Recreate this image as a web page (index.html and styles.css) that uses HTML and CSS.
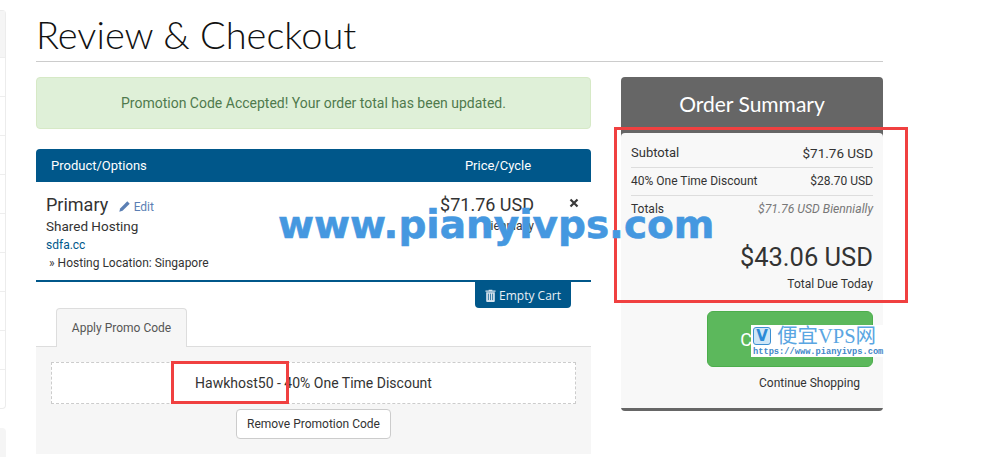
FILE: index.html
```html
<!DOCTYPE html>
<html lang="en">
<head>
    <meta charset="UTF-8" />
    <title>Review &amp; Checkout</title>
    <link rel="stylesheet" href="styles.css">
</head>
<body>
    <div class="page">
        <aside class="sidebar">
            <div class="side-panel">
                <div class="side-head"></div>
                <div class="side-row"></div>
                <div class="side-row"></div>
                <div class="side-row"></div>
                <div class="side-row"></div>
                <div class="side-row"></div>
                <div class="side-row"></div>
                <div class="side-row"></div>
                <div class="side-row"></div>
                <div class="side-row"></div>
            </div>
            <div class="side-next"></div>
        </aside>
        <main class="content">
            <h1 class="title">Review &amp; Checkout</h1>
            <div class="columns">
                <section class="cart">
                    <div class="alert">Promotion Code Accepted! Your order total has been updated.</div>
                    <div class="cart-head">
                        <span class="head-product">Product/Options</span>
                        <span class="head-price">Price/Cycle</span>
                    </div>
                    <div class="cart-item">
                        <div class="item-product">
                            <div class="item-name">Primary
                                <a class="edit">
                                    <svg class="edit-icon" viewBox="0 0 12 12"><path d="M8.6 1.2l2.2 2.2-6.6 6.6-3 .8.8-3z" fill="#5b7fb4"/></svg>
                                    Edit
                                </a>
                            </div>
                            <div class="item-group">Shared Hosting</div>
                            <div class="item-domain">sdfa.cc</div>
                            <div class="item-option">&raquo; Hosting Location: Singapore</div>
                        </div>
                        <div class="item-pricing">
                            <div class="item-price">$71.76 USD</div>
                            <div class="item-cycle">Biennially</div>
                        </div>
                        <svg class="remove" viewBox="0 0 10 10"><path d="M1.5 1.5l7 7M8.5 1.5l-7 7" stroke="#3a3a3a" stroke-width="2.2"/></svg>
                    </div>
                    <div class="cart-actions">
                        <button class="empty-btn">
                            <svg class="trash" viewBox="0 0 12 14"><path d="M4 1.500V.6h4v.9h3.500v1.400H.5V1.500z M1.300 3.500h9.400v9.500a1 1 0 0 1-1 1H2.300a1 1 0 0 1-1-1z" fill="#d5e3ee"/><path d="M3.700 5v7M6 5v7M8.300 5v7" stroke="#00578a" stroke-width=".8"/></svg>
                            Empty Cart
                        </button>
                    </div>
                    <div class="tabs"><span class="tab">Apply Promo Code</span></div>
                    <div class="promo">
                        <div class="promo-code">Hawkhost50 - 40% One Time Discount</div>
                        <button class="promo-remove">Remove Promotion Code</button>
                    </div>
                </section>
                <section class="summary">
                    <h2 class="summary-title">Order Summary</h2>
                    <div class="summary-body">
                        <div class="sum-row"><span class="sum-label">Subtotal</span><span class="sum-amount">$71.76 USD</span></div>
                        <div class="sum-row"><span>40% One Time Discount</span><span>$28.70 USD</span></div>
                        <div class="sum-row sum-last"><span>Totals</span><em>$71.76 USD Biennially</em></div>
                        <div class="due">$43.06 USD</div>
                        <div class="due-label">Total Due Today</div>
                        <div class="btn-wrap">
                            <button class="checkout">Checkout
                                <svg class="checkout-arrow" viewBox="0 0 16 16"><path d="M2 8h11M9 3.500L13.500 8 9 12.500" fill="none" stroke="#fff" stroke-width="2.500"/></svg>
                            </button>
                        </div>
                        <div class="continue">Continue Shopping</div>
                    </div>
                </section>
            </div>
        </main>
    </div>
    <div class="mark-red mark-summary"></div>
    <div class="mark-red mark-code"></div>
    <div class="watermark">www.pianyivps.com</div>
    <div class="stamp">
        <div class="stamp-top"><span class="stamp-logo">V</span><span class="stamp-name">便宜VPS网</span></div>
        <div class="stamp-url">https://www.pianyivps.com</div>
    </div>
</body>
</html>
```
FILE: styles.css
```css
* {
    box-sizing: border-box;
}
html, body {
    height: 457px;
    overflow: hidden;
}
body {
    margin: 0;
    background: #fff;
    color: #333;
    font-family: 'Roboto', sans-serif;
    font-size: 14px;
    position: relative;
}
.page {
    display: flex;
}
.sidebar {
    width: 6px;
    flex-shrink: 0;
}
.side-panel {
    height: 399px;
    margin-top: 10px;
    border: 1px solid #ececec;
    border-left: none;
    border-radius: 0 4px 4px 0;
}
.side-head {
    height: 47px;
    background: #f5f5f5;
    border-bottom: 1px solid #eee;
}
.side-row {
    height: 39px;
    border-bottom: 1px solid #eee;
}
.side-row:last-child {
    border-bottom: none;
}
.side-next {
    height: 40px;
    margin-top: 19px;
    background: #f5f5f5;
    border-radius: 0 4px 0 0;
}
.content {
    width: 847px;
    margin-left: 30px;
}
.title {
    margin: 0;
    height: 62px;
    padding-top: 11px;
    border-bottom: 1px solid #ccc;
    color: #111;
    font-family: 'Lato', sans-serif;
    font-size: 38px;
    font-weight: 300;
    line-height: 46px;
}
.columns {
    display: flex;
    gap: 30px;
    margin-top: 15px;
}
.cart {
    width: 555px;
}
.alert {
    height: 52px;
    background: #dff0d8;
    border: 1px solid #d6e9c6;
    border-radius: 4px;
    color: #4f7a4d;
    text-align: center;
    line-height: 50px;
}
.cart-head {
    display: flex;
    height: 33px;
    margin-top: 20px;
    background: #00578a;
    border-radius: 4px 4px 0 0;
    color: #fff;
    font-size: 13px;
    line-height: 33px;
}
.head-product {
    width: 385px;
    padding-left: 15px;
}
.head-price {
    width: 154px;
    text-align: center;
}
.cart-item {
    display: flex;
    height: 100px;
    position: relative;
    border-bottom: 2px solid #00578a;
    padding-top: 12px;
}
.item-product {
    width: 374px;
    padding-left: 10px;
}
.item-pricing {
    width: 154px;
    padding-right: 30px;
    text-align: right;
}
.item-name {
    font-size: 18px;
    line-height: 22px;
}
.edit {
    margin-left: 5px;
    color: #5b7fb4;
    font-size: 12px;
}
.edit-icon {
    width: 13px;
    height: 13px;
    vertical-align: -2px;
}
.item-group {
    font-size: 13.500px;
    line-height: 20px;
    margin-top: -2px;
}
.item-domain {
    font-size: 12px;
    line-height: 17px;
    margin-top: 1px;
    color: #00578a;
}
.item-option {
    font-size: 12px;
    line-height: 18px;
    padding-left: 3px;
}
.item-price {
    font-size: 18px;
    line-height: 22px;
}
.item-cycle {
    font-size: 12px;
    line-height: 20px;
}
.remove {
    position: absolute;
    top: 16px;
    right: 12px;
    width: 10px;
    height: 10px;
}
.cart-actions {
    display: flex;
    justify-content: flex-end;
    padding-right: 20px;
}
.empty-btn {
    height: 26px;
    width: 96px;
    padding: 0;
    border: none;
    border-radius: 0 0 4px 4px;
    background: #00578a;
    color: #e8f0f5;
    font-family: 'Open Sans', sans-serif;
    font-size: 12px;
}
.trash {
    width: 11px;
    height: 13px;
    vertical-align: -2px;
}
.tabs {
    padding-left: 20px;
    height: 38px;
}
.tab {
    display: block;
    width: 131px;
    height: 39px;
    background: #f6f6f6;
    border: 1px solid #ddd;
    border-bottom: none;
    border-radius: 4px 4px 0 0;
    color: #555;
    font-size: 12px;
    line-height: 38px;
    text-align: center;
    position: relative;
}
.promo {
    height: 108px;
    padding: 15px;
    background: #f6f6f6;
    border-top: 1px solid #ddd;
    text-align: center;
}
.promo-code {
    height: 42px;
    background: #fff;
    border: 1px dashed #ccc;
    font-size: 14px;
    line-height: 40px;
}
.promo-remove {
    height: 30px;
    width: 155px;
    margin-top: 5px;
    padding: 0;
    background: #fff;
    border: 1px solid #ccc;
    border-radius: 4px;
    color: #333;
    font-family: 'Roboto', sans-serif;
    font-size: 12px;
}
.summary {
    width: 262px;
    height: 334px;
    background: #666;
    border-radius: 4px;
}
.summary-title {
    margin: 0;
    height: 56px;
    color: #fff;
    font-family: 'Lato', sans-serif;
    font-size: 21px;
    font-weight: 400;
    line-height: 54px;
    text-align: center;
}
.summary-body {
    height: 275px;
    padding: 7px 10px 0;
    background: #f8f8f8;
    border-radius: 4px 4px 0 0;
    font-size: 12px;
}
.sum-row {
    display: flex;
    justify-content: space-between;
    height: 28px;
    line-height: 26px;
    border-bottom: 1px solid #ddd;
    color: #333;
}
.sum-label {
    font-size: 13px;
}
.sum-amount {
    font-size: 13.500px;
}
.sum-last {
    border-bottom: none;
}
.sum-last em {
    color: #777;
    font-size: 12.200px;
}
.due {
    margin-top: 17px;
    font-size: 25.500px;
    line-height: 32px;
    text-align: right;
}
.due-label {
    margin-top: 2px;
    line-height: 18px;
    text-align: right;
}
.btn-wrap {
    display: flex;
    justify-content: flex-end;
    margin-top: 18px;
}
.checkout {
    width: 166px;
    height: 56px;
    background: #5cb85c;
    border: 1px solid #4cae4c;
    border-radius: 6px;
    color: #fff;
    font-family: 'Roboto', sans-serif;
    font-size: 18px;
}
.checkout-arrow {
    width: 16px;
    height: 16px;
    margin-left: 3px;
    vertical-align: -2px;
}
.continue {
    margin-top: 8px;
    padding-left: 128px;
    line-height: 16px;
}
.mark-red {
    position: absolute;
    border: 3px solid #f04040;
}
.mark-summary {
    left: 614px;
    top: 127px;
    width: 294px;
    height: 176px;
}
.mark-code {
    left: 171px;
    top: 361px;
    width: 118px;
    height: 43px;
}
.watermark {
    position: absolute;
    left: 278px;
    top: 203px;
    color: #4598e0;
    font-family: 'DejaVu Sans', sans-serif;
    font-size: 39px;
    font-weight: 700;
    line-height: 44px;
    white-space: nowrap;
    -webkit-text-stroke: 0.6px #4598e0;
}
.stamp {
    position: absolute;
    left: 751px;
    top: 325px;
    width: 134px;
    height: 32px;
    background: #fff;
}
.stamp-top {
    display: flex;
    align-items: center;
    height: 22px;
    color: #5aa6e2;
    font-family: 'Liberation Serif', 'Noto Sans CJK SC', serif;
    font-size: 20.500px;
}
.stamp-logo {
    width: 18px;
    height: 18px;
    margin: 0 6px 0 2px;
    background: #cfe6f7;
    border: 1px solid #3d8fd0;
    border-radius: 3px;
    color: #2b8ad6;
    font-family: 'DejaVu Sans', sans-serif;
    font-size: 15px;
    font-weight: 700;
    line-height: 16px;
    text-align: center;
}
.stamp-name {
    line-height: 22px;
}
.stamp-url {
    padding-left: 2px;
    color: #3f87c8;
    font-family: 'Liberation Mono', monospace;
    font-size: 8.700px;
    font-weight: 700;
    line-height: 10px;
    white-space: nowrap;
}
```
